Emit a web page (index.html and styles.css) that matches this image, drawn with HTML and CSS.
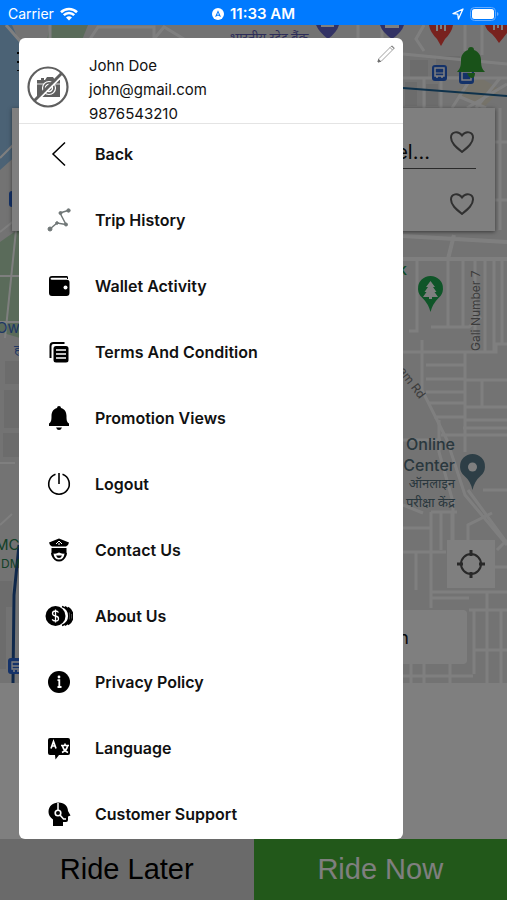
FILE: index.html
```
<!DOCTYPE html>
<html lang="en">
<head>
  <meta charset="UTF-8" />
  <meta name="viewport" content="width=device-width, initial-scale=1.0"/>
  <title>Ride Menu</title>
  <link rel="stylesheet" href="styles.css">
</head>
<body>
  <header class="status-bar">
    <div class="status-left">
      <span>Carrier</span>
      <svg width="18" height="14" viewBox="0 0 18 14" fill="none" stroke="#fff" stroke-width="2.6">
        <path d="M1 5.2a11.5 11.5 0 0 1 16 0M3.8 8.2a7.4 7.4 0 0 1 10.4 0"/>
        <path d="M9 13.6 6 10.6a4.3 4.3 0 0 1 6 0z" fill="#fff" stroke="none"/>
      </svg>
    </div>
    <div class="status-time">
      <svg width="12" height="12" viewBox="0 0 12 12">
        <circle cx="6" cy="6" r="6" fill="#fff"/>
        <path d="M6 2.2 9 9 6 7.6 3 9z" fill="#007aff"/>
        <path d="M6 4.6 7 7 6 6.5 5 7z" fill="#fff"/>
      </svg>
      <span>11:33 AM</span>
    </div>
    <div class="status-right">
      <svg width="12" height="12" viewBox="0 0 12 12" fill="none" stroke="#fff" stroke-width="1.3" stroke-linejoin="round">
        <path d="M11 1 1 5.6l4.8.6L6.4 11z"/>
      </svg>
      <svg width="29" height="14" viewBox="0 0 29 14">
        <rect x=".5" y=".5" width="25" height="13" rx="4" fill="none" stroke="#66adff"/>
        <rect x="2" y="2" width="22" height="10" rx="2.5" fill="#fff"/>
        <path d="M27 5v4c2-.8 2-3.2 0-4z" fill="#66adff"/>
      </svg>
    </div>
  </header>

  <main class="screen">
    <section class="map-area">
      <svg class="map" viewBox="0 25 507 658" preserveAspectRatio="xMinYMin slice">
        <rect y="25" width="507" height="658" fill="#e6e6e6"/>
        <path d="M0 25h12l6 14 10 8v98L0 170z" fill="#96c4ea"/>
        <path d="M50 25h38l-8 20H46z" fill="#b4d6b4"/>
        <path d="M0 242l20-14v110l-20-6z" fill="#b4d6b4"/>
        <g fill="#d9d9d9">
          <path d="M5 361h20v23H5zM4 390h20v38H4zM3 433h20v24H3zM0 581h12v26H0zM0 607h6v62H0z"/>
          <path d="M410 60h18v18h-18zM436 56h24v20h-24zM405 82h12v24h-12zM426 84h12v22h-12z"/>
        </g>
        <path d="M453 92l28-14 20 12-18 18z" fill="#ece6d4"/>
        <g fill="none" stroke="#fff" stroke-width="3">
          <path d="M6 25l14 16M50 25v14M90 39l8-12h56v12M154 39l10-12 20 12M358 25v14M382 25v14M424 25l-8 14 8 12M465 25v26M482 25v30M403 54l104 10M403 78h104"/>
          <path d="M424 78v30M441 78v30M470 80l-18 28M507 84l-40 24M458 96l28 12M500 78l-24 30M495 142h12M495 200h12M500 108v122"/>
          <path d="M0 158l20-20M0 232l20-16M16 230L5 338M0 276h20M0 322h20M0 463h15M0 525l12-11" stroke-width="2"/>
          <path d="M403 236l104 6M454 235l-6 24M403 259h104" stroke-width="4"/>
          <path d="M417 259v72h-8M448 259v67M463 259v67M431 327h38l12-10M475 259v93M485 259v93M494 259v93M502 259v85M403 352h93v-8h11"/>
          <path d="M422 340v50l25 50 18 55 42 50M465 352v100M426 365h38M426 379h38M426 392h38M428 403h36M434 417h32M441 435h66M465 380h42M482 380v28M465 407h42M465 420h42M403 440h38"/>
          <path d="M439 420v32l14 50v40M403 528h28M403 552h43M431 512v96M431 512h26M441 512v38M452 512v28M416 552v38M431 592h76M431 598h38M403 505l20 8M468 490l39 53M468 540v-15l24-12M507 540l-10 10M507 567h-12M507 490h-24M463 428h44"/>
          <path d="M474 610v64M487 592v91M501 610v73M474 650h33M469 610h38M403 676h70M411 664v19M424 664v19M450 664v19"/>
        </g>
        <path d="M403 88l104 8" fill="none" stroke="#1e6496" stroke-width="2"/>
        <path d="M19 545l-5 50-1 88" fill="none" stroke="#1e5096" stroke-width="3"/>
        <g fill="#6464c8">
          <path d="M316 25h23q-2 7-11 14-9-7-12-14z"/>
          <path d="M380 25h24q-2 7-12 14-10-7-12-14z"/>
        </g>
        <path d="M321 25h13v2h-13zM385 25h14v3h-14z" fill="#fff"/>
        <g fill="#f0443c">
          <path d="M429 25h24q-1 7-8 14l-4 7-4-7q-7-7-8-14z"/>
          <path d="M485 25h22v8q-3 4-8 10-4-6-7-9-6-4-7-9z"/>
        </g>
        <path d="M437 25v6M441 25v4M445 25v6M494 25v5M498 25v3M502 25v5" stroke="#fff" stroke-width="2"/>
        <g>
          <rect x="432" y="65" width="15" height="16" rx="3" fill="#2864d2"/>
          <path d="M435 68h9v8h-9zM436 77h2M441 77h2" fill="none" stroke="#fff" stroke-width="1.5"/>
          <path d="M435 73h9" stroke="#fff"/>
          <rect x="459" y="69" width="15" height="15" rx="3" fill="#2864d2"/>
          <path d="M462 72h9v8h-9z" fill="none" stroke="#fff" stroke-width="1.5"/>
          <rect x="9" y="191" width="15" height="16" rx="3" fill="#2864d2"/>
          <rect x="8" y="658" width="15" height="16" rx="3" fill="#2864d2"/>
          <path d="M12 662h8v7h-8zM13 671h2M17 671h2M12 666h8" fill="none" stroke="#fff" stroke-width="1.3"/>
        </g>
        <g>
          <path d="M430.5 312q-2-8-8-14a12.5 12.5 0 1 1 16 0q-6 6-8 14z" fill="#1eaa50"/>
          <path d="M430.5 281l4.5 6h-2l3.500 5h-2l3.500 5h-6v2h-3v-2h-6l3.500-5h-2l3.500-5h-2z" fill="#fff"/>
          <path d="M472.5 490q-2-9-8-14a12.5 12.5 0 1 1 16 0q-6 5-8 14z" fill="#5a7d8c"/>
          <circle cx="472.5" cy="467" r="4.5" fill="#fff"/>
        </g>
        <text class="map-hindi" x="230" y="42" fill="#5a5ab4">भारतीय स्टेट बैंक</text>
        <text class="map-label" x="398" y="275" fill="#1e9650">k</text>
        <text class="map-road" transform="translate(480 351) rotate(-90)">Gali Number 7</text>
        <text class="map-road" transform="translate(398 371) rotate(53)">am Rd</text>
        <g class="map-place" text-anchor="end">
          <text class="map-label" x="455" y="450">Online</text>
          <text class="map-label" x="455" y="471">Center</text>
          <text class="map-hindi" x="455" y="488">ऑनलाइन</text>
          <text class="map-hindi" x="455" y="507">परीक्षा केंद्र</text>
        </g>
        <text class="map-area-name" x="-4" y="333" fill="#3c6ec8">Ow</text>
        <text class="map-hindi" x="14" y="354" fill="#3c6ec8">ह</text>
        <text class="map-area-name" x="-5" y="550" fill="#288250">MC</text>
        <text class="map-road map-green" x="1" y="568">DM</text>
      </svg>

      <div class="map-controls">
        <div class="top-row">
          <button class="icon-btn" aria-label="Open menu">
            <svg width="24" height="24" viewBox="0 0 24 24" stroke="#000" stroke-width="2"><path d="M0 6h23M0 15h23M0 24h23"/></svg>
          </button>
          <button class="icon-btn" aria-label="Notifications">
            <svg width="28" height="32" viewBox="0 0 28 32" fill="#32a432">
              <path d="M14 0a3 3 0 0 1 3 3c5 2 7 6 7 10 0 6 1 9 4 12H0c3-3 4-6 4-12 0-4 2-8 7-10a3 3 0 0 1 3-3zM10 26h8c0 3-1 5-3 5s-4-2-5-5z"/>
            </svg>
          </button>
        </div>
        <div class="location-card">
          <div class="location pickup">
            <span>el...</span>
            <button class="icon-btn" aria-label="Save pickup"><svg class="heart" width="24" height="22" viewBox="0 0 24 22"><path d="M12 21C6 16 1 12 1 6.5 1 1 8-1 12 4.5 16-1 23 1 23 6.5 23 12 18 16 12 21z"/></svg></button>
          </div>
          <div class="location">
            <button class="icon-btn" aria-label="Save drop"><svg class="heart" width="24" height="22" viewBox="0 0 24 22"><path d="M12 21C6 16 1 12 1 6.5 1 1 8-1 12 4.5 16-1 23 1 23 6.5 23 12 18 16 12 21z"/></svg></button>
          </div>
        </div>
        <button class="locate" aria-label="My location">
          <svg width="28" height="28" viewBox="0 0 28 28" fill="none" stroke="#505050" stroke-width="2">
            <circle cx="14" cy="14" r="10"/>
            <path d="M14 0v6M14 22v6M0 14h6M22 14h6" stroke-width="3"/>
          </svg>
        </button>
        <div class="ride-card"><span>n</span></div>
      </div>
    </section>

    <section class="sheet"></section>

    <div class="ride-actions">
      <button class="later">Ride Later</button>
      <button class="now">Ride Now</button>
    </div>

    <div class="overlay">
      <aside class="drawer">
        <div class="profile">
          <svg class="avatar" width="42" height="42" viewBox="0 0 42 42">
            <path d="M10 14h4v-2h3v2h1l2-3h6l2 3h5v17H10z" fill="#5f5f5f"/>
            <path d="M9 18h25" stroke="#fff" stroke-width=".8"/>
            <circle cx="22" cy="22" r="6.5" fill="#5f5f5f" stroke="#fff" stroke-width="1.2"/>
            <circle cx="22" cy="22" r="3.5" fill="none" stroke="#fff" stroke-width="1.4"/>
            <path d="M9 36 37 8" stroke="#fff" stroke-width="2"/>
            <path d="M7 35 35 7" stroke="#5f5f5f" stroke-width="3"/>
            <circle cx="21" cy="21" r="19.5" fill="none" stroke="#5f5f5f" stroke-width="2.2"/>
          </svg>
          <div class="profile-info">
            <p>John Doe</p>
            <p>john@gmail.com</p>
            <p>9876543210</p>
          </div>
          <button class="icon-btn edit" aria-label="Edit profile">
            <svg width="18" height="18" viewBox="0 0 18 18" fill="none" stroke="#a0a0a0">
              <path d="M1 17l1-3.500L14 1.500q1-1 2 0l.500.500q1 1 0 2L4.500 16zM13 2.500 15.500 5"/>
              <path d="M1 17l.600-2.500L3.500 16.400zM14.500 1l2.500 2.500" stroke="#666"/>
            </svg>
          </button>
        </div>

        <nav>
          <ul class="menu">
            <li><a href="#back">
              <svg viewBox="0 0 28 28" fill="none" stroke="#000" stroke-width="1.5"><path d="M20 2.500 8 14l12 11.500"/></svg>
              Back</a></li>
            <li><a href="#trips">
              <svg viewBox="0 0 28 28" fill="#707777" stroke="#707777">
                <path d="M5 23l7-6 9 1.500L15 7l8-2.500" fill="none" stroke-width="1.5"/>
                <circle cx="5" cy="23" r="2"/><circle cx="12" cy="17" r="1.3"/><circle cx="21" cy="18.500" r="1.5"/><circle cx="15.500" cy="7" r="1.5"/><circle cx="23.500" cy="4.500" r="1.7"/>
              </svg>
              Trip History</a></li>
            <li><a href="#wallet">
              <svg viewBox="0 0 28 28">
                <path d="M4 7q0-3 3-3h15q1 0 1 1.500V7h-1V5.800H7q-1.500 0-1.500 1T7 7.800h15q2.500 0 2.500 2.500V21q0 3-3 3H7q-3 0-3-3z"/>
                <circle cx="20.500" cy="15.500" r="2" fill="#fff"/>
              </svg>
              Wallet Activity</a></li>
            <li><a href="#terms">
              <svg viewBox="0 0 28 28">
                <path d="M5.500 20V8q0-3 3-3h11" fill="none" stroke="#000" stroke-width="2"/>
                <rect x="8.500" y="8" width="15" height="16.500" rx="2.5"/>
                <path d="M11 12h10M11 16h10M11 20h10" stroke="#fff" stroke-width="1.5"/>
              </svg>
              Terms And Condition</a></li>
            <li><a href="#promotions">
              <svg viewBox="0 0 28 28"><path d="M14 2a2 2 0 0 1 2 2c4 1 5.500 4.500 5.500 8 0 5 .500 6 2.500 7.500V22H4v-2.500C6 18 6.500 17 6.500 12c0-3.500 1.500-7 5.500-8a2 2 0 0 1 2-2zM11 23.500h6q-1 2.500-3 2.500t-3-2.500z"/></svg>
              Promotion Views</a></li>
            <li><a href="#logout">
              <svg viewBox="0 0 28 28" fill="none" stroke="#000" stroke-width="1.6"><path d="M10.500 4.200a10.300 10.300 0 1 0 7 0M14 3v11"/></svg>
              Logout</a></li>
            <li><a href="#contact">
              <svg viewBox="0 0 28 28">
                <path d="M14 2.500 24 6.500q-.500 3-3 4H7q-2.500-1-3-4z"/>
                <path d="M11 8l3-3 3 3M13 8h2" fill="none" stroke="#fff"/>
                <path d="M6.500 12h15v4.500q1 .500 0 3Q19 25.500 14 25.500T6.500 19.500q-1-2.500 0-3z"/>
                <path d="M8.500 17.500q3 .500 5.500-1 2.500 1.500 5.500 1-.500 6-5.500 6t-5.500-6z" fill="#fff"/>
                <path d="M11 19.500h6q-1 2.500-3 2.500t-3-2.500z"/>
              </svg>
              Contact Us</a></li>
            <li><a href="#about">
              <svg viewBox="0 0 28 28">
                <path d="M17 4.500a10 10 0 0 1 0 19M20 4.800a10.200 10.200 0 0 1 0 18.400M23 5.500a10 10 0 0 1 0 17" fill="none" stroke="#000" stroke-width="1.7"/>
                <circle cx="10.500" cy="14" r="10"/>
                <path d="M13.500 10.500q-1-1.500-3-1.500-3 0-3 2.300t3 2.700 3 2.700-3 2.300q-2.300 0-3.300-1.700M10.500 7.500v13" fill="none" stroke="#fff" stroke-width="1.3"/>
              </svg>
              About Us</a></li>
            <li><a href="#privacy">
              <svg viewBox="0 0 28 28">
                <circle cx="14" cy="14" r="11"/>
                <path d="M12.500 12.200h1.800v7M12.500 19h4" fill="none" stroke="#fff" stroke-width="1.8"/>
                <circle cx="14" cy="9" r="1.4" fill="#fff"/>
              </svg>
              Privacy Policy</a></li>
            <li><a href="#language">
              <svg viewBox="0 0 28 28">
                <path d="M5 4h18q2 0 2 2v13q0 2-2 2h-9l-3.500 4.500L10 21H5q-2 0-2-2V6q0-2 2-2z"/>
                <path d="M6 14.500 8.500 7.500 11 14.500M7 12h3.200M16 11.500h8M20 9.500v2M22.500 12q-1 4.500-5.500 6.500M17.500 12q1.500 5 5.500 6.500" fill="none" stroke="#fff" stroke-width="1.7"/>
              </svg>
              Language</a></li>
            <li><a href="#support">
              <svg viewBox="0 0 28 28">
                <path d="M13.500 2.500c6 0 9.500 4 9.500 8.500l2.500 4.500-2.500 1V20q0 2-2 2h-3v4H8v-6.500Q3.500 16 3.500 12c0-6 4.500-9.500 10-9.500z"/>
                <path d="M13 3v7M15 15l3.500 4h2.500" fill="none" stroke="#fff" stroke-width="1.5"/>
                <circle cx="13" cy="13" r="2.800" fill="#000" stroke="#fff" stroke-width="1.6"/>
              </svg>
              Customer Support</a></li>
          </ul>
        </nav>
      </aside>
    </div>
  </main>
</body>
</html>
```
FILE: styles.css
```
*,
*::before,
*::after {
  margin: 0;
  padding: 0;
  box-sizing: border-box;
}

body {
  height: 100vh;
  display: flex;
  flex-direction: column;
  font-family: Inter, "Liberation Sans", sans-serif;
  color: #111;
  overflow: hidden;
}

button {
  border: none;
  background: none;
  font: inherit;
}

svg {
  display: block;
}

.icon-btn {
  display: flex;
}

/* status bar */
.status-bar {
  height: 25px;
  padding: 2px 8px 0;
  display: grid;
  grid-template-columns: 1fr auto 1fr;
  align-items: center;
  background-color: #007aff;
  color: #fff;
  font-size: 14px;
}

.status-left,
.status-time,
.status-right {
  display: flex;
  align-items: center;
  gap: 6px;
}

.status-time {
  font-size: 15px;
  font-weight: 600;
}

.status-right {
  justify-content: flex-end;
}

/* map screen */
.screen {
  position: relative;
  flex: 1;
  display: flex;
  flex-direction: column;
  min-height: 0;
}

.map-area {
  flex: 1;
  min-height: 0;
  display: grid;
  overflow: hidden;
}

.map,
.map-controls {
  grid-area: 1 / 1;
  width: 100%;
  height: 100%;
  min-height: 0;
}

.map-place {
  fill: #55707c;
}

.map-label {
  font-size: 16px;
  font-weight: 500;
}

.map-hindi {
  font-family: "Noto Sans", "Noto Sans Devanagari", sans-serif;
  font-size: 13px;
}

.map-road {
  font-size: 12px;
  fill: #787878;
}

.map-area-name {
  font-size: 15px;
}

.map-green {
  fill: #288250;
}

.map-controls {
  display: flex;
  flex-direction: column;
  padding: 22px 12px 19px;
}

.top-row {
  display: flex;
  justify-content: space-between;
  padding: 0 10px 0 5px;
  height: 61px;
}

.location-card {
  height: 123px;
  padding: 0 19px;
  background-color: #fff;
  box-shadow: 0 1px 4px rgba(0, 0, 0, 0.5);
}

.location {
  height: 61px;
  display: flex;
  justify-content: flex-end;
  align-items: center;
  padding: 8px 2px 0;
}

.pickup {
  border-bottom: 1px solid #555;
  gap: 20px;
  font-size: 20px;
}

.pickup span {
  padding-top: 20px;
}

.heart {
  fill: none;
  stroke: #606060;
  stroke-width: 2;
}

.locate {
  width: 48px;
  height: 48px;
  margin-top: auto;
  margin-bottom: 22px;
  align-self: flex-end;
  display: grid;
  place-items: center;
  background-color: #fff;
}

.ride-card {
  height: 54px;
  margin: 0 28px;
  padding-right: 58px;
  display: flex;
  align-items: center;
  justify-content: flex-end;
  background-color: #fff;
  border-radius: 4px;
  font-size: 18px;
}

.sheet {
  height: 156px;
  background-color: #fff;
}

.ride-actions {
  height: 61px;
  display: grid;
  grid-template-columns: 1fr 1fr;
  font-family: "Liberation Sans", Arial, sans-serif;
  font-size: 29px;
}

.later {
  background-color: #d4d4d4;
  color: #000;
}

.now {
  background-color: #44b034;
  color: #fff;
}

/* drawer */
.overlay {
  position: absolute;
  inset: 0;
  display: flex;
  padding: 13px 0 61px 19px;
  background-color: rgba(0, 0, 0, 0.5);
}

.drawer {
  width: 384px;
  max-width: 80%;
  background-color: #fff;
  border-radius: 6px;
  overflow: hidden;
}

.profile {
  height: 86px;
  display: flex;
  align-items: flex-start;
  padding: 18px 8px 0;
  border-bottom: 1px solid #e4e4e4;
}

.avatar {
  margin-top: 10px;
}

.profile-info {
  flex: 1;
  display: grid;
  gap: 4px;
  padding-left: 20px;
  font-size: 15px;
  line-height: 20px;
}

.edit {
  margin-top: -11px;
}

.menu {
  list-style: none;
  display: grid;
  gap: 6px;
}

.menu a {
  height: 60px;
  display: flex;
  align-items: center;
  gap: 22px;
  padding-left: 26px;
  color: #111;
  font-size: 16px;
  font-weight: 600;
  text-decoration: none;
}

.menu svg {
  width: 28px;
  height: 28px;
}
```
